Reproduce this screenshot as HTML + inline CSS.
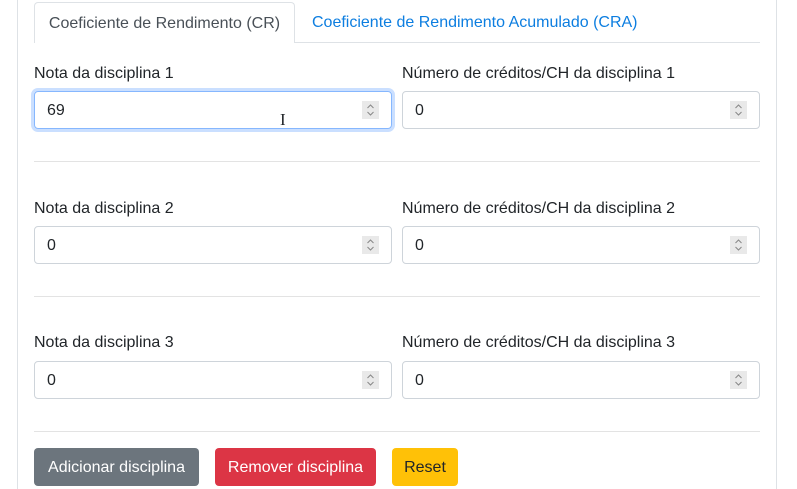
<!DOCTYPE html><html><head><style>
body{margin:0;width:797px;height:489px;overflow:hidden;background:#fff;font-family:"Liberation Sans",sans-serif;font-size:16px;color:#212529;position:relative}
.a{position:absolute}
.vl{position:absolute;top:0;width:1px;height:489px;background:#dee2e6}
.hr{position:absolute;left:34px;width:726px;height:1px;background:#e3e3e3}
.lab{position:absolute;font-size:16px;line-height:20px}
.inp{position:absolute;border:1px solid #ced4da;border-radius:4px;box-sizing:border-box;height:38px;padding-left:12px;line-height:38px}
.sp{position:absolute;right:12px;top:9px;width:17px;height:18px;background:#e9e9e9}
.sp svg{display:block}
.btn{position:absolute;top:448px;height:38px;line-height:40px;text-align:center;border-radius:4px;color:#fff}
</style></head><body>
<div class="vl" style="left:17px"></div><div class="vl" style="left:776px"></div>
<div class="a" style="left:34px;top:42px;width:726px;height:1px;background:#dee2e6"></div>
<div class="a" style="left:34px;top:2px;width:261px;height:41px;border:1px solid #dee2e6;border-bottom:none;border-radius:4px 4px 0 0;background:#fff;box-sizing:border-box;text-align:center;line-height:42px;color:#495057">Coeficiente de Rendimento (CR)</div>
<div class="a" style="left:312px;top:2px;line-height:42px;color:#0d7ee0">Coeficiente de Rendimento Acumulado (CRA)</div>

<div class="lab" style="left:34px;top:64px">Nota da disciplina 1</div>
<div class="lab" style="left:402px;top:64px">Número de créditos/CH da disciplina 1</div>
<div class="inp" style="left:34px;top:91px;width:358px;border-color:#86b7fe;box-shadow:0 0 0 3px rgba(13,110,253,.22)">69<div class="sp"><svg width="17" height="18"><path d="M5.5 7L8.5 4L11.5 7M5.5 11L8.5 14L11.5 11" fill="none" stroke="#888" stroke-width="1"/></svg></div></div>
<div class="a" style="left:280px;top:110px;font-size:17px;font-family:'Liberation Serif',serif">I</div>
<div class="inp" style="left:402px;top:91px;width:358px">0<div class="sp"><svg width="17" height="18"><path d="M5.5 7L8.5 4L11.5 7M5.5 11L8.5 14L11.5 11" fill="none" stroke="#888"/></svg></div></div>
<div class="hr" style="top:161px"></div>

<div class="lab" style="left:34px;top:199px">Nota da disciplina 2</div>
<div class="lab" style="left:402px;top:199px">Número de créditos/CH da disciplina 2</div>
<div class="inp" style="left:34px;top:226px;width:358px">0<div class="sp"><svg width="17" height="18"><path d="M5.5 7L8.5 4L11.5 7M5.5 11L8.5 14L11.5 11" fill="none" stroke="#888"/></svg></div></div>
<div class="inp" style="left:402px;top:226px;width:358px">0<div class="sp"><svg width="17" height="18"><path d="M5.5 7L8.5 4L11.5 7M5.5 11L8.5 14L11.5 11" fill="none" stroke="#888"/></svg></div></div>
<div class="hr" style="top:296px"></div>

<div class="lab" style="left:34px;top:333px">Nota da disciplina 3</div>
<div class="lab" style="left:402px;top:333px">Número de créditos/CH da disciplina 3</div>
<div class="inp" style="left:34px;top:361px;width:358px">0<div class="sp"><svg width="17" height="18"><path d="M5.5 7L8.5 4L11.5 7M5.5 11L8.5 14L11.5 11" fill="none" stroke="#888"/></svg></div></div>
<div class="inp" style="left:402px;top:361px;width:358px">0<div class="sp"><svg width="17" height="18"><path d="M5.5 7L8.5 4L11.5 7M5.5 11L8.5 14L11.5 11" fill="none" stroke="#888"/></svg></div></div>
<div class="hr" style="top:431px"></div>

<div class="btn" style="left:34px;width:165px;background:#6c757d">Adicionar disciplina</div>
<div class="btn" style="left:215px;width:161px;background:#dc3545">Remover disciplina</div>
<div class="btn" style="left:392px;width:66px;background:#ffc107;color:#212529">Reset</div>
</body></html>
